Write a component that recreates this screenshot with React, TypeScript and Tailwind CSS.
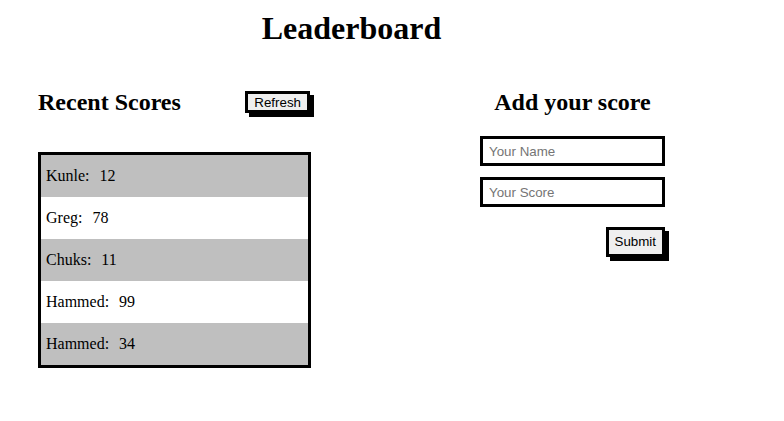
const scores = [
  { name: "Kunle", score: 12 },
  { name: "Greg", score: 78 },
  { name: "Chuks", score: 11 },
  { name: "Hammed", score: 99 },
  { name: "Hammed", score: 34 },
];

export default function App() {
  return (
    <div className="min-h-screen bg-white font-['Liberation_Serif',serif] text-black">
      <div className="ml-[38px] w-[627px] pt-[10px]">
        <h1 className="text-center text-[32px] font-bold leading-[37px]">Leaderboard</h1>

        <div className="mt-[41px] flex justify-between">
          <div className="w-[276px]">
            <div className="flex items-start justify-between">
              <h2 className="text-[24px] font-bold leading-[28px]">Recent Scores</h2>
              <button className="mr-[4px] mt-[3px] h-[22px] border-[3px] border-black bg-[#efefef] px-[6px] font-['Liberation_Sans',sans-serif] text-[13.33px] leading-[15px] shadow-[4px_4px_0_#000]">
                Refresh
              </button>
            </div>

            <ul className="mt-[36px] w-[273px] border-[3px] border-black">
              {scores.map((s, i) => (
                <li
                  key={i}
                  className={`flex h-[42px] items-center pl-[5px] text-[16px] ${
                    i % 2 === 0 ? "bg-[#bfbfbf]" : "bg-white"
                  }`}
                >
                  {s.name}:<span className="ml-[10px]">{s.score}</span>
                </li>
              ))}
            </ul>
          </div>

          <div className="flex w-[185px] flex-col">
            <h2 className="text-center text-[24px] font-bold leading-[28px]">Add your score</h2>
            <input
              placeholder="Your Name"
              className="mt-[20px] h-[30px] w-[185px] border-[3px] border-black px-[6px] font-['Liberation_Sans',sans-serif] text-[13.33px] outline-none placeholder:text-[#757575]"
            />
            <input
              placeholder="Your Score"
              className="mt-[11px] h-[30px] w-[185px] border-[3px] border-black px-[6px] font-['Liberation_Sans',sans-serif] text-[13.33px] outline-none placeholder:text-[#757575]"
            />
            <div className="mt-[20px] flex justify-end">
              <button className="h-[30px] border-[3px] border-black bg-[#efefef] px-[6px] font-['Liberation_Sans',sans-serif] text-[13.33px] shadow-[4px_4px_0_#000]">
                Submit
              </button>
            </div>
          </div>
        </div>
      </div>
    </div>
  );
}
